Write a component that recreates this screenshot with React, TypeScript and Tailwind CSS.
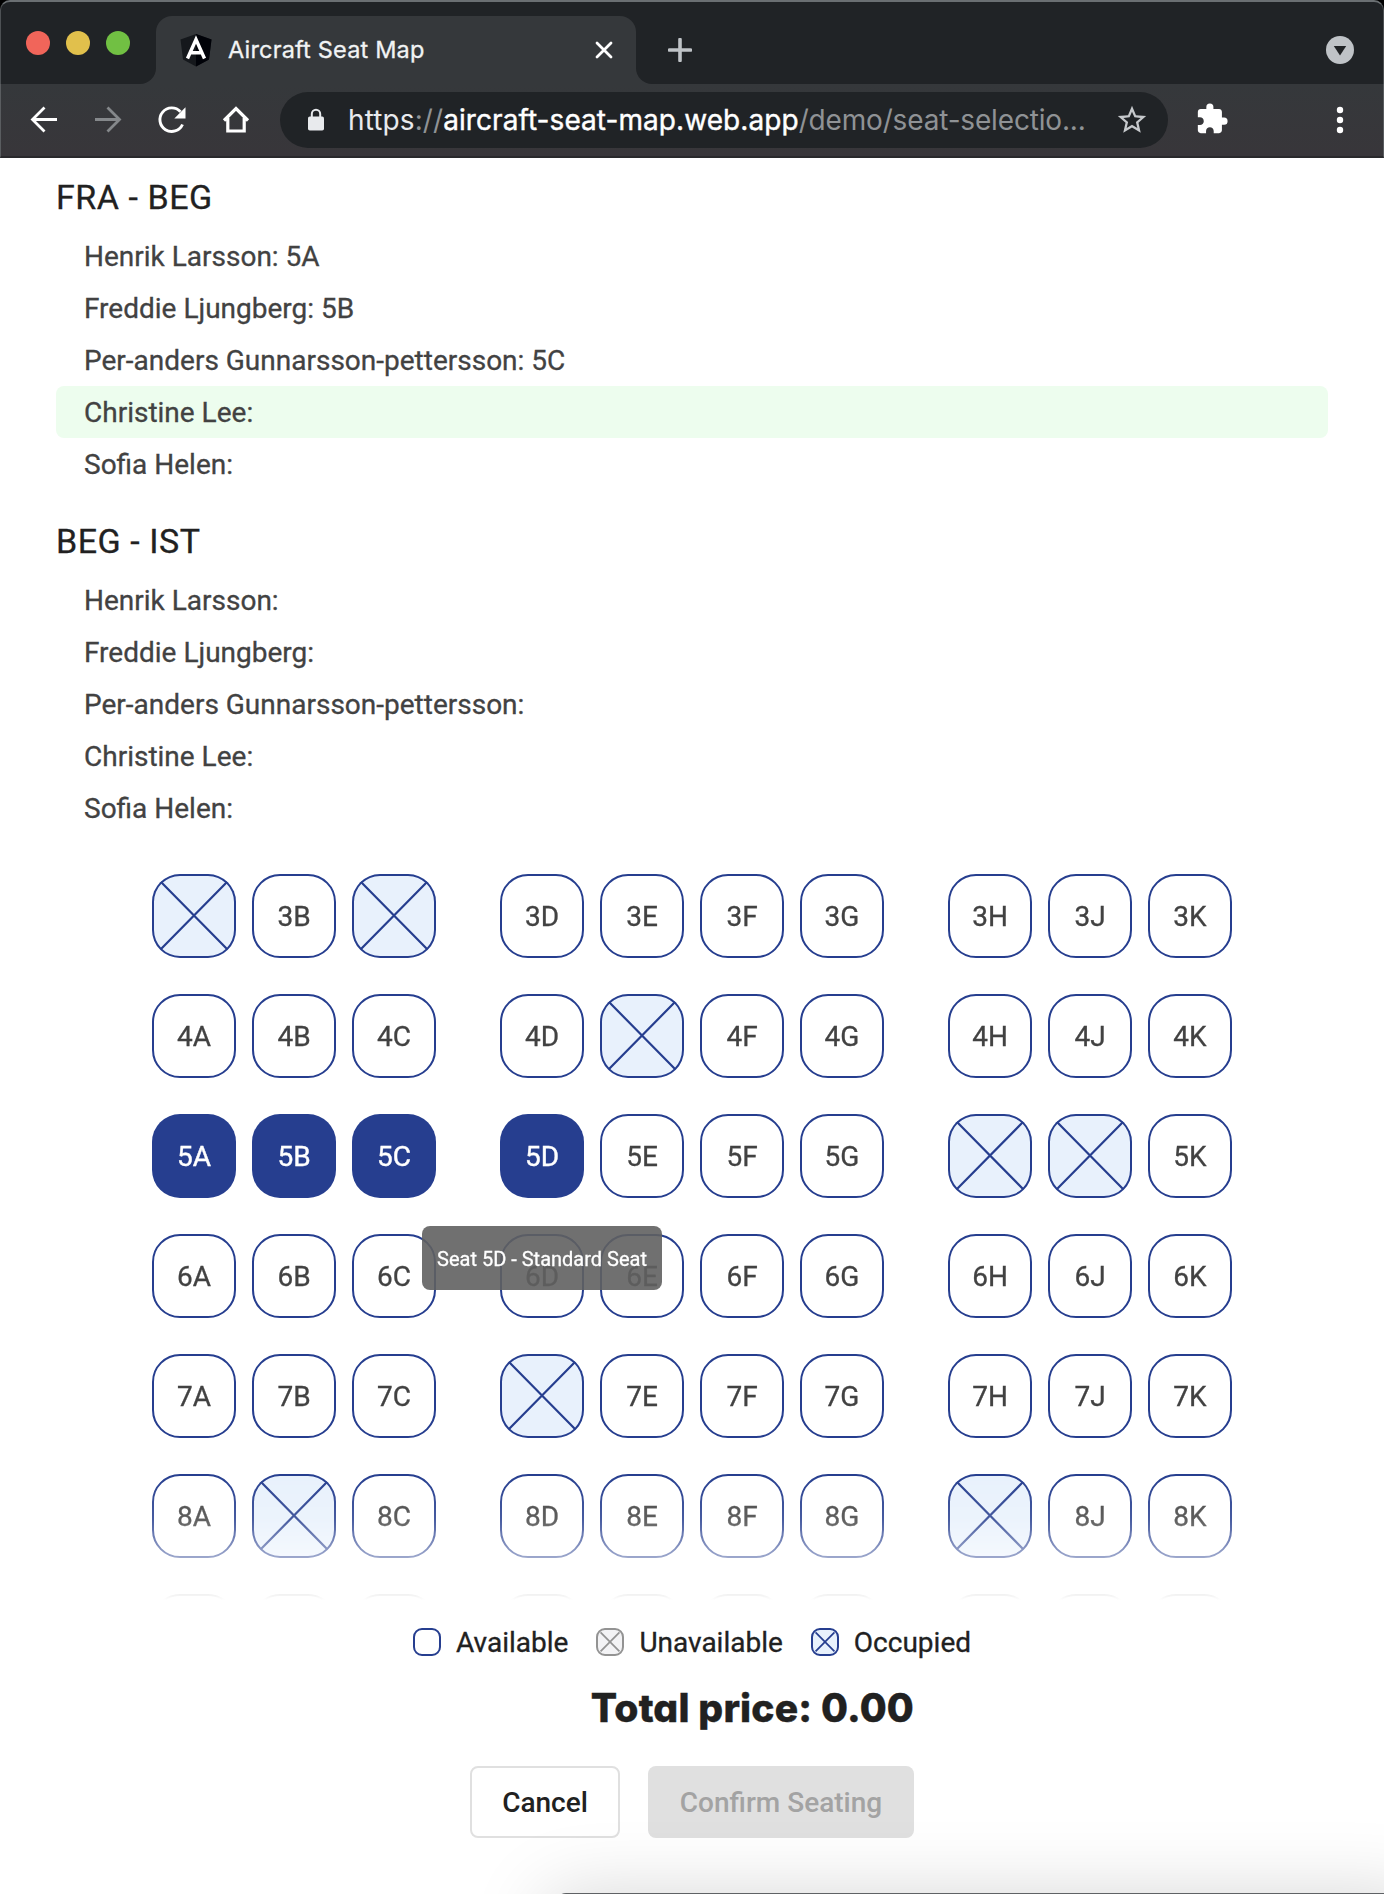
import React from 'react';
import { MdExtension, MdLock, MdRefresh, MdStarBorder } from 'react-icons/md';

const PASSENGERS = [
  'Henrik Larsson',
  'Freddie Ljungberg',
  'Per-anders Gunnarsson-pettersson',
  'Christine Lee',
  'Sofia Helen',
];

const SEGMENTS = [
  { route: 'FRA - BEG', seats: ['5A', '5B', '5C', '', ''], active: 3 },
  { route: 'BEG - IST', seats: ['', '', '', '', ''], active: -1 },
];

const ROWS = [3, 4, 5, 6, 7, 8];
const GROUPS = [
  ['A', 'B', 'C'],
  ['D', 'E', 'F', 'G'],
  ['H', 'J', 'K'],
];
const OCCUPIED = ['3A', '3C', '4E', '5H', '5J', '7D', '8B', '8H'];
const SELECTED = ['5A', '5B', '5C', '5D'];

function Favicon() {
  return (
    <svg width="32" height="34" viewBox="0 0 32 34" className="shrink-0">
      <path d="M16 1 L31.500 6.500 L29 26.500 L16 33.500 L3 26.500 L0.500 6.500 Z" fill="#15181c" />
      <path d="M16 1 L31.500 6.500 L29 26.500 L16 33.500 Z" fill="#000208" />
      <path d="M7.500 25.500 L16 6.500 L24.500 25.500 M11 19.800 H21" fill="none" stroke="#fff" strokeWidth="3.400" />
    </svg>
  );
}

function TabStrip() {
  return (
    <div className="flex h-[84px] rounded-t-[10px] border-x border-t-2 border-x-[#4d5154] border-t-[#6a6f72] bg-[#202326] pt-[14px]">
      <div className="flex h-[54px] w-[139px] gap-4 pl-[25px] pt-[15px]">
        <span className="size-6 rounded-full bg-[#f1655a]" />
        <span className="size-6 rounded-full bg-[#e1c04c]" />
        <span className="size-6 rounded-full bg-[#71c043]" />
      </div>
      <div className="flex h-[68px] w-4 items-end bg-gradient-to-b from-[#202326] from-50% to-[#35383b] to-50%">
        <div className="h-[68px] w-4 rounded-br-2xl bg-[#202326]" />
      </div>
      <div className="flex h-[68px] w-[480px] items-center rounded-t-2xl bg-[#35383b] pl-6 pr-[22px]">
        <Favicon />
        <span className="ml-4 text-[23.500px] tracking-[0.180px] text-[#f1f3f4] [-webkit-text-stroke:0.300px_#f1f3f4]">
          Aircraft Seat Map
        </span>
        <svg width="20" height="20" viewBox="0 0 20 20" className="ml-auto">
          <path d="M3 3 L17 17 M17 3 L3 17" stroke="#fff" strokeWidth="2.800" strokeLinecap="round" />
        </svg>
      </div>
      <div className="h-[68px] w-4 bg-gradient-to-b from-[#202326] from-50% to-[#35383b] to-50%">
        <div className="h-[68px] w-4 rounded-bl-2xl bg-[#202326]" />
      </div>
      <svg width="24" height="24" viewBox="0 0 24 24" className="ml-4 mt-[22px]">
        <path d="M12 1.500 V22.500 M1.500 12 H22.500" stroke="#bfc3c7" strokeWidth="3.600" strokeLinecap="round" />
      </svg>
      <svg width="28" height="28" viewBox="0 0 28 28" className="ml-auto mr-[29px] mt-5">
        <circle cx="14" cy="14" r="14" fill="#bfc3c7" />
        <path d="M7.800 10 H20.200 L14 19.500 Z" fill="#202326" />
      </svg>
    </div>
  );
}

function Toolbar() {
  return (
    <div className="flex h-[74px] items-start border-x border-b-2 border-x-[#5a5d60] border-b-[#29292c] bg-gradient-to-b from-[#35383b] to-[#38363a] pl-[23px] pt-2">
      <div className="flex h-14 items-center gap-6">
        <svg width="40" height="40" viewBox="0 0 40 40" fill="none" stroke="#fff" strokeWidth="2.800">
          <path d="M33 19.500 H9 M20.500 7.500 L8.500 19.500 L20.500 31.500" />
        </svg>
        <svg width="40" height="40" viewBox="0 0 40 40" fill="none" stroke="#85888b" strokeWidth="2.800">
          <path d="M7 19.500 H31 M19.500 7.500 L31.500 19.500 L19.500 31.500" />
        </svg>
        <svg width="40" height="40" viewBox="0 0 40 40" fill="none">
          <path d="M30.500 24.500 A11.800 11.800 0 1 1 28.500 11.800" stroke="#fff" strokeWidth="2.900" />
          <path d="M33.500 7.300 V18.500 H22.300 Z" fill="#fff" />
        </svg>
        <svg width="40" height="40" viewBox="0 0 40 40" fill="none" stroke="#fff" strokeWidth="3.200">
          <path d="M8 20.500 L20 8.500 L32 20.500 M11.800 18 V31 H28.200 V18" />
        </svg>
      </div>
      <div className="ml-6 flex h-14 w-[888px] items-center rounded-full bg-[#202326] pl-6">
        <svg width="24" height="24" viewBox="0 0 24 24" fill="none">
          <rect x="4" y="8.500" width="16" height="14" rx="1.800" fill="#e8eaed" />
          <path d="M7.800 9 V6 A4.200 4.200 0 0 1 16.200 6 V9" stroke="#e8eaed" strokeWidth="2" />
        </svg>
        <div className="ml-5 whitespace-nowrap text-[28px] tracking-[0.100px] text-[#8f9295]">
          <span className="text-[#e8eaed]">https</span>://
          <span className="tracking-[0.070px] text-white [-webkit-text-stroke:0.400px_#fff]">aircraft-seat-map.web.app</span>
          <span className="tracking-[-0.170px]">/demo/seat-selectio...</span>
        </div>
        <MdStarBorder className="ml-auto mr-[19px] size-[34px] text-[#c6c9cc]" />
      </div>
      <MdExtension className="ml-[27px] mt-[10px] size-[34px] text-white" />
      <svg width="8" height="28" viewBox="0 0 8 28" fill="#fff" className="ml-auto mr-[39px] mt-[14px]">
        <circle cx="4" cy="4" r="3.200" />
        <circle cx="4" cy="14" r="3.200" />
        <circle cx="4" cy="24" r="3.200" />
      </svg>
    </div>
  );
}

function Cross({ color, width }: { color: string; width: number }) {
  return (
    <svg viewBox="0 0 84 84" className="size-full">
      <path d="M9 8 L75 75 M75 8 L9 75" stroke={color} strokeWidth={width} />
    </svg>
  );
}

function Seat({ id }: { id: string }) {
  if (OCCUPIED.includes(id)) {
    return (
      <div className="size-[84px] rounded-[28px] bg-[#e8f1fc] shadow-[inset_0_0_0_2px_#263e8f]">
        <Cross color="#263e8f" width={2.200} />
      </div>
    );
  }
  if (SELECTED.includes(id)) {
    return (
      <div className="flex size-[84px] items-center justify-center rounded-[28px] bg-[#263e8f] pt-0.5 text-[28px] text-white [-webkit-text-stroke:0.400px_#fff]">
        {id}
      </div>
    );
  }
  return (
    <div className="flex size-[84px] items-center justify-center rounded-[28px] border-2 border-[#263e8f] pt-0.5 text-[28px] [-webkit-text-stroke:0.300px_#424242]">
      {id}
    </div>
  );
}

function LegendItem({ label, kind }: { label: string; kind: 'free' | 'blocked' | 'taken' }) {
  const box = {
    free: 'border-[#263e8f] bg-white',
    blocked: 'border-[#939393] bg-[#f3f3f5]',
    taken: 'border-[#263e8f] bg-[#e8f1fc]',
  }[kind];
  return (
    <div className="flex items-center gap-[15px]">
      <div className={'flex size-7 rounded-[9px] border-2 ' + box}>
        {kind !== 'free' && <Cross color={kind === 'taken' ? '#263e8f' : '#939393'} width={6} />}
      </div>
      <span className="pt-0.5 [-webkit-text-stroke:0.300px_#212121]">{label}</span>
    </div>
  );
}

export default function App() {
  return (
    <div className="relative h-[1894px] w-[1384px] overflow-hidden bg-white font-['Roboto',sans-serif] text-[#424242]">
      <header className="bg-black font-['Inter',sans-serif]">
        <TabStrip />
        <Toolbar />
      </header>

      <section className="px-14 pt-4">
        {SEGMENTS.map((segment) => (
          <div key={segment.route} className="mb-[28px]">
            <h2 className="mb-4 h-10 text-[34px] leading-[46px] tracking-[0.550px] text-[#212121] [-webkit-text-stroke:0.300px_#212121]">
              {segment.route}
            </h2>
            {PASSENGERS.map((name, i) => (
              <div
                key={name}
                className={
                  'h-[52px] rounded-lg pl-7 text-[28px] leading-[54px] [-webkit-text-stroke:0.300px_#424242] ' +
                  (segment.active === i ? 'bg-[#edfdee]' : '')
                }
              >
                {name}: {segment.seats[i]}
              </div>
            ))}
          </div>
        ))}
      </section>

      <section className="relative mt-10 h-[726px] overflow-hidden [mask-image:linear-gradient(to_bottom,black_600px,rgba(0,0,0,0.850)_645px,rgba(0,0,0,0.450)_684px,rgba(0,0,0,0.080)_720px,transparent_726px)]">
        <div className="mx-[152px] flex flex-col gap-9">
          {ROWS.map((row) => (
            <div key={row} className="flex gap-16">
              {GROUPS.map((letters) => (
                <div key={letters[0]} className="flex gap-4">
                  {letters.map((letter) => (
                    <Seat key={letter} id={row + letter} />
                  ))}
                </div>
              ))}
            </div>
          ))}
          <div className="flex gap-16">
            {GROUPS.map((letters) => (
              <div key={letters[0]} className="flex gap-4">
                {letters.map((letter) => (
                  <div key={letter} className="size-[84px] rounded-[28px] border-2 border-[#424242]" />
                ))}
              </div>
            ))}
          </div>
        </div>
        <div className="absolute left-[422px] top-[352px] flex h-16 w-60 items-center justify-center whitespace-nowrap rounded-lg bg-[#616161]/90 pt-0.5 text-[20px] text-white [-webkit-text-stroke:0.300px_#fff]">
          Seat 5D - Standard Seat
        </div>
      </section>

      <section className="mt-7 flex h-7 justify-center gap-7 text-[28px] leading-7 text-[#212121]">
        <LegendItem label="Available" kind="free" />
        <LegendItem label="Unavailable" kind="blocked" />
        <LegendItem label="Occupied" kind="taken" />
      </section>

      <footer className="mx-auto mt-6 w-[444px]">
        <div className="h-[56px] whitespace-nowrap text-right font-['Inter',sans-serif] text-[39px] font-extrabold leading-[56px] tracking-[0.180px] text-[#212121] [-webkit-text-stroke:0.400px_#212121] [font-feature-settings:'cv11']">
          Total price: 0.00
        </div>
        <div className="mt-[30px] flex gap-7 text-[28px] font-medium">
          <button className="h-[72px] w-[150px] rounded-lg border-2 border-[#e0e0e0] pt-0.5 text-[#212121]">Cancel</button>
          <button className="h-[72px] w-[266px] rounded-lg bg-[#e0e0e0] pt-0.5 text-[#a3a3a3]">Confirm Seating</button>
        </div>
      </footer>

      <div className="absolute left-[556px] top-[1892.5px] h-40 w-[860px] rounded-[10px] bg-[#5f6265] shadow-[0_12px_76px_10px_rgba(0,0,0,0.170)]" />
    </div>
  );
}
